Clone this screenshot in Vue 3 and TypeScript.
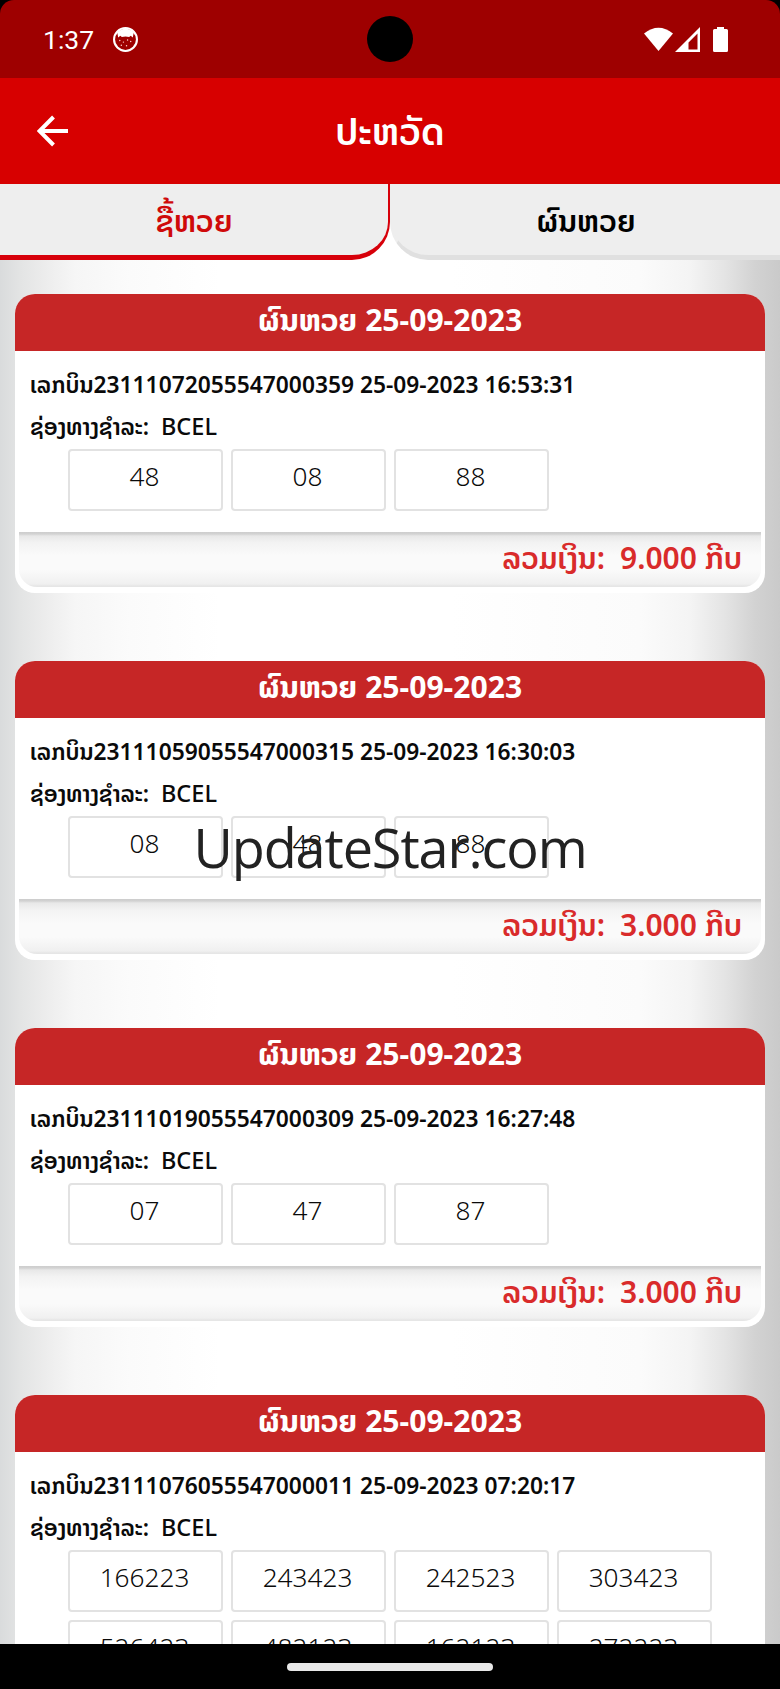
<script setup lang="ts">
import { ref } from 'vue'

interface Bill {
  id: string
  drawDate: string
  paidAt: string
  channel: string
  numbers: string[]
  total: string
}

const activeTab = ref<'buy' | 'result'>('buy')

const bills: Bill[] = [
  {
    id: '23111072055547000359',
    drawDate: '25-09-2023',
    paidAt: '25-09-2023 16:53:31',
    channel: 'BCEL',
    numbers: ['48', '08', '88'],
    total: '9.000'
  },
  {
    id: '23111059055547000315',
    drawDate: '25-09-2023',
    paidAt: '25-09-2023 16:30:03',
    channel: 'BCEL',
    numbers: ['08', '48', '88'],
    total: '3.000'
  },
  {
    id: '23111019055547000309',
    drawDate: '25-09-2023',
    paidAt: '25-09-2023 16:27:48',
    channel: 'BCEL',
    numbers: ['07', '47', '87'],
    total: '3.000'
  },
  {
    id: '23111076055547000011',
    drawDate: '25-09-2023',
    paidAt: '25-09-2023 07:20:17',
    channel: 'BCEL',
    numbers: ['166223', '243423', '242523', '303423', '526423', '482123', '162123', '272223'],
    total: '8.000'
  }
]
</script>

<template>
  <div class="screen">
    <div class="status-bar">
      <span class="clock">1:37</span>
      <svg class="status-face" viewBox="0 0 24 24">
        <circle cx="12" cy="12" r="11" fill="none" stroke="#fff" stroke-width="2" />
        <path d="M4 5Q12-2 20 5L19 10L17 8.500L15.500 9.500Q12 8.500 8.500 9.500L7 8.500L5 10Z" fill="#fff" />
        <g fill="#ffd5d0">
          <circle cx="6.500" cy="13" r=".7" />
          <circle cx="10" cy="14.500" r=".7" />
          <circle cx="14" cy="12.500" r=".7" />
          <circle cx="17" cy="14" r=".7" />
          <circle cx="8" cy="17.500" r=".7" />
          <circle cx="13" cy="18" r=".7" />
        </g>
      </svg>
      <span class="camera"></span>
      <div class="status-icons">
        <svg width="29" height="25" viewBox="0 0 29 25">
          <path d="M0 6.5Q14.500-5 29 6.500L14.500 24Z" fill="#fff" />
        </svg>
        <svg width="25" height="25" viewBox="0 0 25 25">
          <path d="M0 25L25 0V25ZM13.500 22.500H22.500V6.500L13.500 15.500Z" fill="#fff" fill-rule="evenodd" />
        </svg>
        <svg class="battery" width="15" height="25" viewBox="0 0 15 25">
          <path d="M4 0H11V2H13.500Q15 2 15 3.500V23.500Q15 25 13.500 25H1.500Q0 25 0 23.500V3.500Q0 2 1.500 2H4Z" fill="#fff" />
        </svg>
      </div>
    </div>

    <header class="app-bar">
      <svg class="back" width="32" height="32" viewBox="0 0 32 32">
        <path d="M31 16H3M16.500 2L2.500 16L16.500 30" fill="none" stroke="#fff" stroke-width="4" />
      </svg>
      <h1 class="title"><span class="lao">ປະຫວັດ</span></h1>
    </header>

    <nav class="tabs">
      <button :class="['tab', 'tab-left', { active: activeTab === 'buy' }]" @click="activeTab = 'buy'">
        <span class="lao">ຊື້ຫວຍ</span>
      </button>
      <button :class="['tab', 'tab-right', { active: activeTab === 'result' }]" @click="activeTab = 'result'">
        <span class="lao">ຜົນຫວຍ</span>
      </button>
    </nav>

    <main class="list">
      <section v-for="bill in bills" :key="bill.id" class="card">
        <div class="card-header"><span class="lao">ຜົນຫວຍ</span><span class="date">{{ bill.drawDate }}</span></div>
        <div class="card-body">
          <div class="bill-line"><span class="lao">ເລກບິນ</span>{{ bill.id }} {{ bill.paidAt }}</div>
          <div class="channel-line"><span class="lao">ຊ່ອງທາງຊຳລະ:</span><span>{{ bill.channel }}</span></div>
          <div class="numbers">
            <span v-for="n in bill.numbers" :key="n" class="number">{{ n }}</span>
          </div>
        </div>
        <div class="card-total">
          <span class="lao total-label">ລວມເງິນ:</span><span class="amount">{{ bill.total }}</span><span class="lao kip">ກີບ</span>
        </div>
      </section>
    </main>

    <div class="nav-bar"><span class="handle"></span></div>
    <div class="watermark">UpdateStar.com</div>
  </div>
</template>

<style>
body {
  margin: 0;
  background: #000;
}
</style>

<style scoped>
.screen {
  position: relative;
  display: flex;
  flex-direction: column;
  width: 780px;
  height: 1689px;
  overflow: hidden;
  background: #000;
  font-family: 'Noto Sans', 'Noto Sans Lao', 'DejaVu Sans', sans-serif;
  color: #0a0a0a;
}

.lao {
  font-family: 'Noto Sans Lao', 'DejaVu Sans', sans-serif;
  line-height: 0;
  white-space: nowrap;
}

.status-bar {
  position: relative;
  flex: none;
  display: flex;
  align-items: center;
  height: 78px;
  padding: 0 52px 0 43px;
  box-sizing: border-box;
  background: #9e0000;
  border-radius: 14px 14px 0 0;
}

.clock {
  width: 70px;
  font: 26.500px/30px Roboto, sans-serif;
  color: #fff;
  padding-top: 2px;
}

.status-face {
  width: 25px;
  height: 25px;
  margin-top: 1px;
}

.camera {
  position: absolute;
  left: 367px;
  top: 16px;
  width: 46px;
  height: 46px;
  border-radius: 50%;
  background: #000;
}

.status-icons {
  display: flex;
  gap: 2px;
  margin-left: auto;
}

.battery {
  margin-left: 11px;
}

.app-bar {
  flex: none;
  display: grid;
  grid-template-columns: 80px 1fr 80px;
  align-items: center;
  height: 106px;
  background: #d70000;
}

.back {
  margin-left: 37px;
}

.title {
  margin: 0;
  text-align: center;
  font-size: 37.500px;
  line-height: 58px;
  font-weight: 650;
  color: #fff;
}

.tabs {
  flex: none;
  display: flex;
  height: 76px;
  background: #fff;
}

.tab {
  flex: 1;
  box-sizing: border-box;
  padding: 2px 0 0;
  border: 0 solid #e0e0e0;
  border-bottom-width: 5px;
  background: #eee;
  font-size: 30.500px;
  font-weight: 650;
  line-height: 60px;
  color: #000;
}

.tab-left {
  border-right-width: 2px;
  border-radius: 0 0 38px 0;
}

.tab-right {
  border-left-width: 2px;
  border-left-color: #eee;
  border-radius: 0 0 0 38px;
}

.tab.active {
  border-color: #d7000a;
  color: #cf0a0a;
}

.list {
  flex: 1;
  min-height: 0;
  overflow: hidden;
  padding: 34px 15px 0;
  background: linear-gradient(90deg, #d9dbdc 0, #e3e4e4 20px, #eee 50px, #f6f6f6 75px, #fbfbfb 130px, #fff 220px, #fff 450px, #fbfbfb 640px, #f4f4f4 690px, #e4e4e4 725px, #d2d2d2 755px, #cacaca 780px);
}

.card {
  height: 299px;
  margin-bottom: 68px;
  border-radius: 20px;
  overflow: hidden;
  background: #fff;
  display: flex;
  flex-direction: column;
}

.card:last-child {
  height: auto;
}

.card-header {
  flex: none;
  height: 57px;
  background: #c62626;
  color: #fff;
  text-align: center;
  font-size: 30.100px;
  line-height: 51px;
  font-weight: 700;
}

.card-header .lao {
  font-size: 30.600px;
}

.date {
  margin-left: 8px;
}

.card-body {
  flex: 1;
  padding: 13px 15px 0;
}

.bill-line,
.channel-line {
  white-space: nowrap;
}

.bill-line {
  height: 41px;
  line-height: 42px;
  font-size: 22.770px;
  font-weight: 600;
}

.channel-line {
  height: 41px;
  line-height: 42px;
  font-size: 23.5px;
  font-weight: 500;
}

.channel-line .lao {
  display: inline-block;
  width: 131px;
  font-size: 22.700px;
  font-weight: 600;
  letter-spacing: -0.1px;
}

.numbers {
  display: grid;
  grid-template-columns: repeat(4, 155px);
  gap: 8px;
  padding: 3px 0 20px 38px;
}

.number {
  box-sizing: border-box;
  height: 62px;
  padding-right: 2px;
  border: 2px solid #e2e2e2;
  border-radius: 4px;
  text-align: center;
  font-size: 26.200px;
  font-weight: 350;
  line-height: 50px;
}

.card-total {
  flex: none;
  height: 55px;
  margin: 0 4px 6px;
  padding-right: 19px;
  box-sizing: border-box;
  border-radius: 0 0 18px 18px;
  background: linear-gradient(#cdcdcd 0, #d2d2d2 2px, #e8e8e8 4px, #f3f3f3 11px, #fafafa 24px, #fafafa 38px, #f0f0f0 52px, #e6e6e6 54px);
  text-align: right;
  font-size: 30px;
  font-weight: 600;
  line-height: 51px;
  color: #d92b2b;
}

.amount {
  margin: 0 8px 0 15px;
  font-weight: 650;
}

.nav-bar {
  flex: none;
  display: flex;
  align-items: center;
  justify-content: center;
  height: 45px;
  background: #000;
}

.handle {
  width: 206px;
  height: 8px;
  border-radius: 4px;
  background: #e8e8e8;
}

.watermark {
  position: absolute;
  left: 0;
  right: 0;
  top: 812px;
  text-align: center;
  font-family: 'Open Sans', sans-serif;
  font-size: 54px;
  line-height: 70px;
  letter-spacing: -1.1px;
  color: #222;
}
</style>
